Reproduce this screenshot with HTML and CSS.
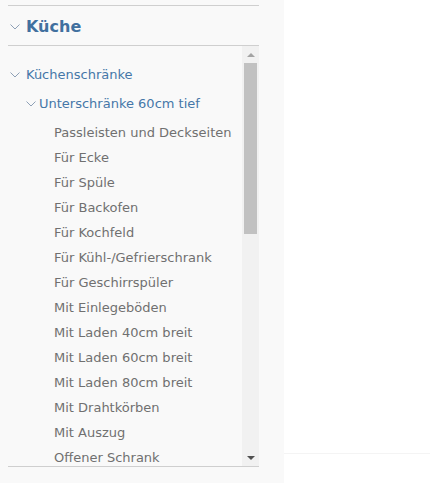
FILE: index.html
```html
<!DOCTYPE html>
<html lang="de">
<head>
<meta charset="utf-8">
<title>Küche</title>
<link rel="stylesheet" href="styles.css">
</head>
<body>
<div class="page">
  <aside class="sidebar">
    <div class="box">
      <div class="head">
        <svg class="chev" width="10" height="6" viewBox="0 0 10 6"><polyline points="0.5,0.5 5,5 9.5,0.5" fill="none" stroke="#8ea0b6" stroke-width="1"/></svg>
        <span class="head-title">Küche</span>
      </div>
      <div class="scroller">
        <ul class="list">
          <li class="row lvl1">
            <svg class="chev" width="10" height="6" viewBox="0 0 10 6"><polyline points="0.5,0.5 5,5 9.5,0.5" fill="none" stroke="#8ea0b6" stroke-width="1"/></svg>
            <span>Küchenschränke</span>
          </li>
          <li class="row lvl2">
            <svg class="chev" width="10" height="6" viewBox="0 0 10 6"><polyline points="0.5,0.5 5,5 9.5,0.5" fill="none" stroke="#8ea0b6" stroke-width="1"/></svg>
            <span>Unterschränke 60cm tief</span>
          </li>
          <li class="row item">Passleisten und Deckseiten</li>
          <li class="row item">Für Ecke</li>
          <li class="row item">Für Spüle</li>
          <li class="row item">Für Backofen</li>
          <li class="row item">Für Kochfeld</li>
          <li class="row item">Für Kühl-/Gefrierschrank</li>
          <li class="row item">Für Geschirrspüler</li>
          <li class="row item">Mit Einlegeböden</li>
          <li class="row item">Mit Laden 40cm breit</li>
          <li class="row item">Mit Laden 60cm breit</li>
          <li class="row item">Mit Laden 80cm breit</li>
          <li class="row item">Mit Drahtkörben</li>
          <li class="row item">Mit Auszug</li>
          <li class="row item">Offener Schrank</li>
        </ul>
        <div class="sbar">
          <div class="sbtn"><span class="tri-up"></span></div>
          <div class="thumb"></div>
          <div class="sfill"></div>
          <div class="sbtn"><span class="tri-down"></span></div>
        </div>
      </div>
    </div>
  </aside>
  <main class="main">
    <div class="main-line"></div>
  </main>
</div>
</body>
</html>
```
FILE: styles.css
```css
html, body {
  margin: 0;
  padding: 0;
  background: #ffffff;
}
body {
  font-family: "DejaVu Sans", Verdana, sans-serif;
}
.page {
  display: flex;
  width: 430px;
  height: 483px;
  overflow: hidden;
}
.sidebar {
  width: 284px;
  flex: none;
  background: #f9f9f9;
  padding: 5px 25px 0 8px;
  box-sizing: border-box;
}
.box {
  border-top: 1px solid #cfcfcf;
  border-bottom: 1px solid #cfcfcf;
}
.head {
  height: 40px;
  display: flex;
  align-items: center;
  padding-left: 2px;
  border-bottom: 1px solid #cfcfcf;
  box-sizing: border-box;
  padding-top: 2px;
}
.head .chev {
  margin-right: 6px;
}
.head-title {
  font-size: 16px;
  font-weight: bold;
  color: #41709f;
}
.scroller {
  display: flex;
  height: 420px;
}
.list {
  list-style: none;
  margin: 0;
  padding: 16px 0 0 0;
  flex: 1;
  overflow: hidden;
}
.row {
  height: 25px;
  display: flex;
  align-items: center;
  font-size: 13px;
  white-space: nowrap;
}
.lvl1, .lvl2 {
  color: #4577a8;
  margin-bottom: 4px;
}
.lvl1 {
  padding-left: 2px;
}
.lvl1 .chev {
  margin-right: 6px;
}
.lvl2 {
  padding-left: 18px;
}
.lvl2 .chev {
  margin-right: 3px;
}
.item {
  padding-left: 46px;
  color: #707070;
}
.sbar {
  width: 17px;
  flex: none;
  background: #f1f1f1;
  display: flex;
  flex-direction: column;
}
.sbtn {
  height: 17px;
  display: flex;
  align-items: center;
  justify-content: center;
}
.tri-up {
  width: 0;
  height: 0;
  border-left: 4px solid transparent;
  border-right: 4px solid transparent;
  border-bottom: 4px solid #a3a3a3;
}
.tri-down {
  width: 0;
  height: 0;
  border-left: 4px solid transparent;
  border-right: 4px solid transparent;
  border-top: 4px solid #505050;
}
.thumb {
  height: 171px;
  margin: 0 2px;
  background: #c1c1c1;
}
.sfill {
  flex: 1;
}
.main {
  flex: 1;
  position: relative;
}
.main-line {
  margin-top: 453px;
  height: 1px;
  background: #f4f4f4;
}
```
